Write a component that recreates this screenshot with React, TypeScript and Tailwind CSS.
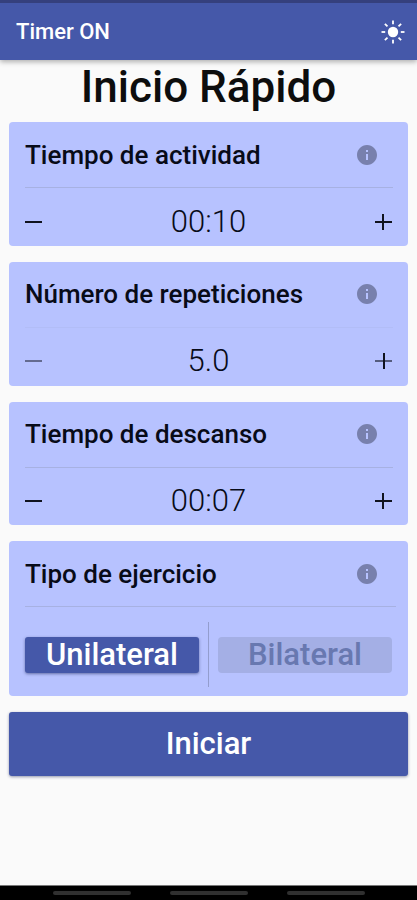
import React from "react";

function InfoIcon() {
  return (
    <svg viewBox="0 0 24 24" className="size-6 shrink-0 fill-[#7880ad]">
      <path d="M12 2C6.48 2 2 6.48 2 12s4.480 10 10 10 10-4.480 10-10S17.520 2 12 2zm1 15h-2v-6h2v6zm0-8h-2V7h2v2z" />
    </svg>
  );
}

function SunIcon() {
  const rays = [0, 45, 90, 135, 180, 225, 270, 315];
  return (
    <svg viewBox="0 0 24 24" className="size-6 shrink-0 fill-white">
      <circle cx="12" cy="12" r="5.2" />
      {rays.map((a) => (
        <path key={a} d="M11.1 0.500h1.800v3.700h-1.800z" transform={`rotate(${a} 12 12)`} />
      ))}
    </svg>
  );
}

function CardHeading({ title }: { title: string }) {
  return (
    <div className="flex h-[65px] items-center justify-between pr-[13px]">
      <h2 className="text-[26px] leading-[30px] font-medium whitespace-nowrap text-[#080b18]">{title}</h2>
      <InfoIcon />
    </div>
  );
}

type CounterProps = { title: string; value: string; minusClass?: string; plusClass?: string; lineClass?: string };

function CounterCard({
  title,
  value,
  minusClass = "bg-[#10131f]",
  plusClass = "bg-[#10131f]",
  lineClass = "bg-[#a7b1e2]",
}: CounterProps) {
  return (
    <section className="h-[123.800px] rounded-[4px] bg-[#b7c2ff] px-4">
      <CardHeading title={title} />
      <div className={`mr-[-1px] h-px ${lineClass}`} />
      <div className="flex h-[67px] items-center justify-between">
        <button aria-label="-" className="flex h-4 w-[17px] items-center">
          <span className={`h-[2px] w-full ${minusClass}`} />
        </button>
        <span className="text-[31px] leading-9 font-light text-[#080b18]">{value}</span>
        <button aria-label="+" className="grid h-4 w-[17px] place-items-center">
          <span className={`col-start-1 row-start-1 h-[2px] w-full ${plusClass}`} />
          <span className="col-start-1 row-start-1 h-full w-[2px] bg-[#10131f]" />
        </button>
      </div>
    </section>
  );
}

export default function App() {
  return (
    <div className="flex h-[900px] w-[417px] flex-col overflow-hidden bg-[#fafafa] font-['Roboto',sans-serif]">
      <header className="z-10 flex h-[60px] shrink-0 items-center justify-between border-t-[3px] border-[#35407d] bg-[#4558a9] pr-3 pl-4 shadow-[0_2px_5px_rgba(0,0,0,0.3)]">
        <span className="text-[22px] leading-7 font-medium text-white">Timer ON</span>
        <SunIcon />
      </header>
      <main className="flex flex-1 flex-col px-[9px]">
        <h1 className="h-[62px] pt-px text-center text-[44px] leading-[52px] font-medium text-[#0d0d0d]">Inicio Rápido</h1>
        <div className="flex flex-col gap-4">
          <CounterCard title="Tiempo de actividad" value="00:10" />
          <CounterCard
            title="Número de repeticiones"
            value="5.0"
            minusClass="bg-[#646b90]"
            plusClass="bg-[#555c7e]"
            lineClass="bg-[#b2bdf7]"
          />
          <CounterCard title="Tiempo de descanso" value="00:07" />
          <section className="h-[154.500px] rounded-[4px] bg-[#b7c2ff] px-4">
            <CardHeading title="Tipo de ejercicio" />
            <div className="mr-[-4px] h-px bg-[#a7b1e2]" />
            <div className="mt-[15px] flex h-[65px] items-center justify-between">
              <button className="h-[36px] w-[174px] rounded-[3px] bg-[#4558a9] text-[31px] leading-9 font-medium text-white shadow-[0_1px_3px_rgba(20,30,80,0.5)]">
                Unilateral
              </button>
              <div className="h-full w-px bg-[#939dce]" />
              <button className="h-[36px] w-[174px] rounded-[4px] bg-[#a4afe5] text-[31px] leading-9 font-medium text-[#6878b0]">
                Bilateral
              </button>
            </div>
          </section>
          <button className="h-[64.500px] rounded-[3px] bg-[#4558a9] text-[31px] font-medium text-white shadow-[0_1px_3px_rgba(20,30,80,0.45)]">
            Iniciar
          </button>
        </div>
      </main>
      <nav className="flex h-[15px] shrink-0 justify-center gap-[39px] border-t border-[#777] bg-black pt-[5px]">
        <span className="h-[4px] w-[78px] rounded-sm bg-[#303030]" />
        <span className="h-[4px] w-[78px] rounded-sm bg-[#303030]" />
        <span className="h-[4px] w-[78px] rounded-sm bg-[#303030]" />
      </nav>
    </div>
  );
}
